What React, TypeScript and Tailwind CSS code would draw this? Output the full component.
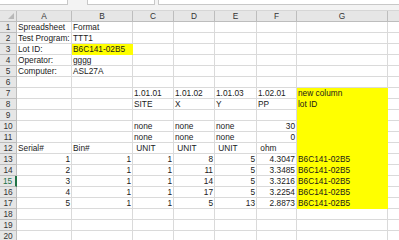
import React from "react";
import clsx from "clsx";

type Cell = { v: string; align?: "l" | "r"; fill?: boolean };

// last header cell is the partly visible column past G
const cols = ["A", "B", "C", "D", "E", "F", "G", ""];

const L = (v: string, fill = false): Cell => ({ v, align: "l", fill });
const R = (v: string, fill = false): Cell => ({ v, align: "r", fill });
const E = (fill = false): Cell => ({ v: "", fill });

const lot = "B6C141-02B5";

const rows: Cell[][] = [
  [L("Spreadsheet"), L("Format"), E(), E(), E(), E(), E(), E()],
  [L("Test Program:"), L("TTT1"), E(), E(), E(), E(), E(), E()],
  [L("Lot ID:"), L(lot, true), E(), E(), E(), E(), E(), E()],
  [L("Operator:"), L("gggg"), E(), E(), E(), E(), E(), E()],
  [L("Computer:"), L("ASL27A"), E(), E(), E(), E(), E(), E()],
  [E(), E(), E(), E(), E(), E(), E(), E()],
  [E(), E(), L("1.01.01"), L("1.01.02"), L("1.01.03"), L("1.02.01"), L("new column", true), E()],
  [E(), E(), L("SITE"), L("X"), L("Y"), L("PP"), L("lot ID", true), E()],
  [E(), E(), E(), E(), E(), E(), E(true), E()],
  [E(), E(), L("none"), L("none"), L("none"), R("30"), E(true), E()],
  [E(), E(), L("none"), L("none"), L("none"), R("0"), E(true), E()],
  [L("Serial#"), L("Bin#"), L("\u00a0UNIT"), L("\u00a0UNIT"), L("\u00a0UNIT"), L("\u00a0ohm"), E(true), E()],
  [R("1"), R("1"), R("1"), R("8"), R("5"), R("4.3047"), L(lot, true), E()],
  [R("2"), R("1"), R("1"), R("11"), R("5"), R("3.3485"), L(lot, true), E()],
  [R("3"), R("1"), R("1"), R("14"), R("5"), R("3.3216"), L(lot, true), E()],
  [R("4"), R("1"), R("1"), R("17"), R("5"), R("3.2254"), L(lot, true), E()],
  [R("5"), R("1"), R("1"), R("5"), R("13"), R("2.8873"), L(lot, true), E()],
  [E(), E(), E(), E(), E(), E(), E(), E()],
  [E(), E(), E(), E(), E(), E(), E(), E()],
  [E(), E(), E(), E(), E(), E(), E(), E()],
];

const activeRow = 15;

export default function App() {
  return (
    <div
      className="w-[399px] h-[240px] overflow-hidden bg-white text-[8.3px] text-[#1a1a1a]"
      style={{ fontFamily: '"Liberation Sans", Arial, sans-serif' }}
    >
      {/* name box / formula bar remnants */}
      <div className="h-[11px] bg-[#f3f3f3] flex items-start border-b border-[#d6d6d6]">
        <div className="w-[68px] h-[5px] bg-white border-r border-b border-[#c8c8c8]" />
        <div className="w-[19px]" />
        <div className="w-[68px] h-[5px] bg-white border-l border-r border-b border-[#c8c8c8]" />
        <div className="w-[3px]" />
        <div className="flex-1 h-[5px] bg-white border-l border-b border-[#c8c8c8]" />
      </div>

      <div className="w-[480px] grid grid-cols-[17px_55px_61px_41px_41px_42px_40px_91px_64px] auto-rows-[11px]">
        {/* corner */}
        <div className="relative bg-[#e6e6e6] border-r border-b border-[#bdbdbd]">
          <div className="absolute right-[2px] bottom-[2px] w-0 h-0 border-l-[6px] border-l-transparent border-b-[6px] border-b-[#b8b8b8]" />
        </div>
        {cols.map((c, i) => (
          <div
            key={i}
            className="bg-[#e6e6e6] border-r border-b border-[#bdbdbd] flex items-center justify-center text-[#333] leading-none"
          >
            {c}
          </div>
        ))}

        {rows.map((row, i) => {
          const n = i + 1;
          const active = n === activeRow;
          return (
            <React.Fragment key={n}>
              <div
                className={clsx(
                  "bg-[#e6e6e6] border-b border-[#bdbdbd] flex items-center justify-center leading-none",
                  active ? "border-r-2 border-r-[#217346] text-[#217346] bg-[#d9d9d9]" : "border-r text-[#333]"
                )}
              >
                {n}
              </div>
              {row.map((cell, j) => (
                <div
                  key={j}
                  className={clsx(
                    "border-r border-b whitespace-nowrap overflow-visible px-[1px] leading-[10px] flex items-end",
                    cell.fill ? "bg-[#ffff00] border-[#ffff00]" : "border-[#dadada]",
                    cell.align === "r" ? "justify-end" : "justify-start"
                  )}
                >
                  {cell.v}
                </div>
              ))}
            </React.Fragment>
          );
        })}
      </div>
    </div>
  );
}
